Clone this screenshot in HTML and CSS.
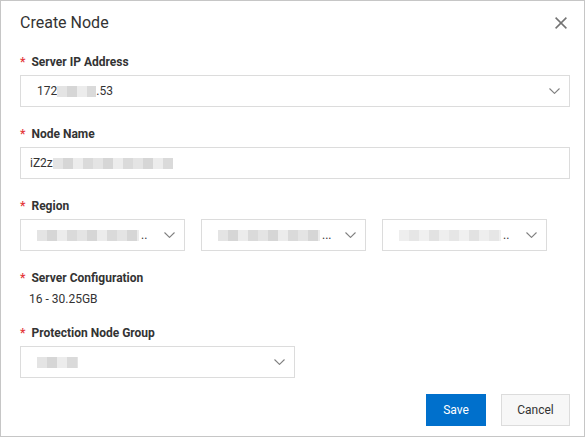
FILE: index.html
```html
<!DOCTYPE html>
<html lang="en">
<head>
<meta charset="utf-8">
<title>Create Node</title>
<link rel="stylesheet" href="styles.css">
</head>
<body>
<div class="dialog">
  <div class="dialog-header">
    <h1 class="dialog-title">Create Node</h1>
    <button class="close" type="button" aria-label="Close">
      <svg width="12" height="12" viewBox="0 0 12 12"><path d="M0.6 0.6L11.4 11.4M11.4 0.6L0.6 11.4" stroke="#737373" stroke-width="1.5" fill="none"/></svg>
    </button>
  </div>
  <div class="dialog-body">
    <div class="form-item">
      <label class="label"><span class="req">*</span>Server IP Address</label>
      <div class="select">
        <span class="value">172<span class="blur b-ip"></span>.53</span>
        <svg class="chev" width="11" height="6" viewBox="0 0 11 6"><path d="M0.5 0.5L5.5 5.4L10.5 0.5" stroke="#808080" stroke-width="1.1" fill="none"/></svg>
      </div>
    </div>
    <div class="form-item">
      <label class="label"><span class="req">*</span>Node Name</label>
      <div class="input">
        <span class="value">iZ2z<span class="blur b-name"></span></span>
      </div>
    </div>
    <div class="form-item">
      <label class="label"><span class="req">*</span>Region</label>
      <div class="region-row">
        <div class="select">
          <span class="value"><span class="blur b-region"></span>..</span>
          <svg class="chev" width="11" height="6" viewBox="0 0 11 6"><path d="M0.5 0.5L5.5 5.4L10.5 0.5" stroke="#808080" stroke-width="1.1" fill="none"/></svg>
        </div>
        <div class="select">
          <span class="value"><span class="blur b-region"></span>...</span>
          <svg class="chev" width="11" height="6" viewBox="0 0 11 6"><path d="M0.5 0.5L5.5 5.4L10.5 0.5" stroke="#808080" stroke-width="1.1" fill="none"/></svg>
        </div>
        <div class="select">
          <span class="value"><span class="blur b-region b-light"></span>..</span>
          <svg class="chev" width="11" height="6" viewBox="0 0 11 6"><path d="M0.5 0.5L5.5 5.4L10.5 0.5" stroke="#808080" stroke-width="1.1" fill="none"/></svg>
        </div>
      </div>
    </div>
    <div class="form-item form-item-static">
      <label class="label"><span class="req">*</span>Server Configuration</label>
      <div class="static">16 - 30.25GB</div>
    </div>
    <div class="form-item">
      <label class="label"><span class="req">*</span>Protection Node Group</label>
      <div class="select select-half">
        <span class="value"><span class="blur b-group"></span></span>
        <svg class="chev" width="11" height="6" viewBox="0 0 11 6"><path d="M0.5 0.5L5.5 5.4L10.5 0.5" stroke="#808080" stroke-width="1.1" fill="none"/></svg>
      </div>
    </div>
  </div>
  <div class="dialog-footer">
    <button class="btn btn-primary" type="button">Save</button>
    <button class="btn btn-default" type="button">Cancel</button>
  </div>
</div>
</body>
</html>
```

FILE: styles.css
```css
* { box-sizing: border-box; }
html, body { margin: 0; padding: 0; background: #fff; }
body {
  font-family: "Roboto", "Open Sans", "Liberation Sans", sans-serif;
  font-size: 12px;
  color: #333;
}
.dialog {
  width: 585px;
  height: 437px;
  border: 1px solid #c6c6c6;
  display: flex;
  flex-direction: column;
}
.dialog-header {
  flex: none;
  display: flex;
  justify-content: space-between;
  align-items: flex-start;
  height: 52px;
  padding: 10px 17px 0 19px;
}
.dialog-title {
  margin: 0;
  font-size: 16px;
  font-weight: 400;
  line-height: 24px;
  color: #333;
}
.close {
  border: 0;
  background: transparent;
  padding: 0;
  margin-top: 6px;
  width: 12px;
  height: 12px;
  display: flex;
  cursor: pointer;
}
.dialog-body {
  flex: 1;
  padding: 0 14px 0 19px;
}
.form-item { margin-bottom: 18px; }
.form-item:last-child { margin-bottom: 0; }
.label {
  display: block;
  font-weight: 700;
  line-height: 18px;
  margin-bottom: 4px;
  color: #333;
}
.req {
  color: #e4393c;
  margin-right: 6px;
  font-weight: 700;
}
.select, .input {
  height: 32px;
  border: 1px solid #dcdcdc;
  display: flex;
  align-items: center;
  justify-content: space-between;
  background: #fff;
}
.select { padding: 0 9px 0 16px; }
.input { padding: 0 9px; }
.value { display: flex; align-items: center; line-height: 18px; color: #333; }
.chev { flex: none; }
.region-row {
  display: grid;
  grid-template-columns: 165px 165px 165px;
  gap: 16px;
}
.select-half { width: 275px; }
.form-item-static { margin-bottom: 16px; }
.form-item-static .label { margin-bottom: 0; }
.static { line-height: 18px; padding: 3px 0 0 9px; color: #333; }
.blur {
  display: inline-block;
  height: 11px;
  background: repeating-linear-gradient(90deg, #e4e4e4 0 10px, #d6d6d6 10px 20px, #ececec 20px 30px, #dadada 30px 40px);
}
.b-ip { width: 39px; }
.b-name { width: 120px; }
.b-region { width: 102px; margin-right: 2px; }
.b-light { background: repeating-linear-gradient(90deg, #eeeeee 0 10px, #e6e6e6 10px 20px, #f0f0f0 20px 30px, #e2e2e2 30px 40px); }
.b-group { width: 41px; }
.dialog-footer {
  flex: none;
  display: flex;
  justify-content: flex-end;
  gap: 15px;
  padding: 0 14px 10px 0;
}
.btn {
  height: 32px;
  font-family: inherit;
  font-size: 12px;
  border: 1px solid #dcdcdc;
  cursor: pointer;
  padding: 0;
}
.btn-primary {
  width: 60px;
  background: #0070cc;
  border-color: #0070cc;
  color: #fff;
}
.btn-default {
  width: 69px;
  background: #f7f7f7;
  color: #333;
}
```
